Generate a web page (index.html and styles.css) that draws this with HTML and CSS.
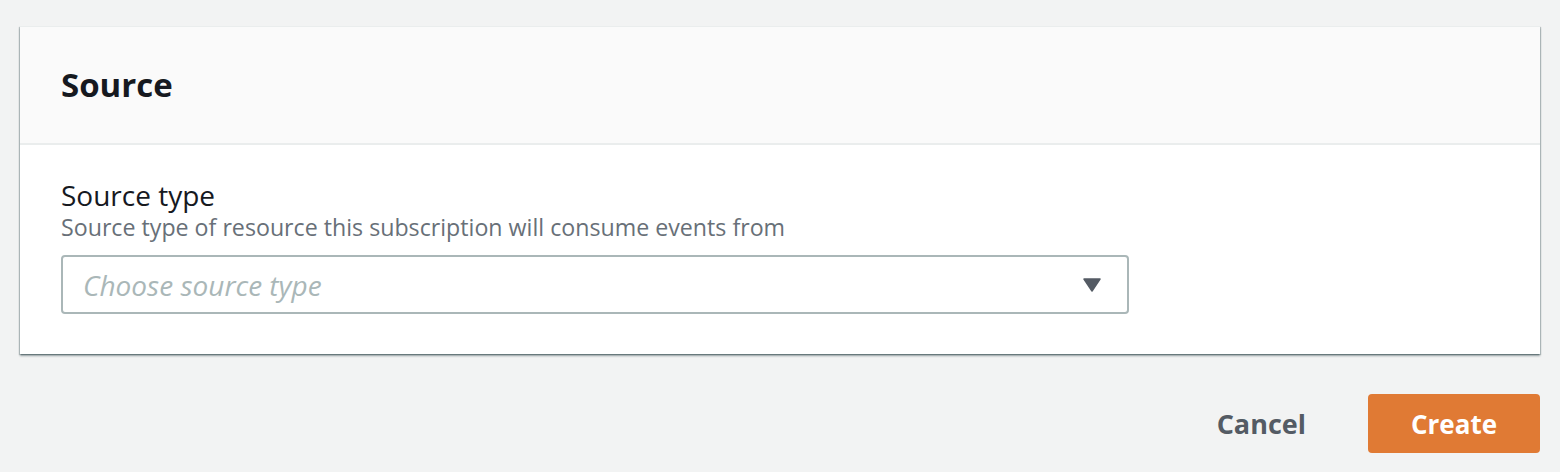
FILE: index.html
```html
<!DOCTYPE html>
<html>
<head>
<meta charset="utf-8">
<link rel="stylesheet" href="styles.css">
</head>
<body>
<div class="page">
  <div class="card">
    <div class="card-header">
      <h2 class="title">Source</h2>
    </div>
    <div class="card-body">
      <div class="field">
        <div class="label">Source type</div>
        <div class="desc">Source type of resource this subscription will consume events from</div>
        <div class="select">
          <span class="placeholder">Choose source type</span>
          <svg class="caret" width="18" height="14" viewBox="0 0 18 14"><path d="M1 1 H17 L9 13 Z" fill="#545b64" stroke="#545b64" stroke-width="1.5" stroke-linejoin="round"/></svg>
        </div>
      </div>
    </div>
  </div>
  <div class="actions">
    <button class="btn-link">Cancel</button>
    <button class="btn-primary">Create</button>
  </div>
</div>
</body>
</html>
```
FILE: styles.css
```css
html, body {
  margin: 0;
  padding: 0;
  background: #f2f3f3;
  font-family: "Open Sans", "Noto Sans", sans-serif;
}
.page {
  padding: 26px 20px 0 20px;
}
.card {
  background: #ffffff;
  border-top: 1px solid #eaeded;
  box-shadow: 0 2px 2px 0 rgba(0, 28, 36, 0.35), 1px 1px 1px 0 rgba(0, 28, 36, 0.2), -1px 1px 1px 0 rgba(0, 28, 36, 0.2);
}
.card-header {
  background: #fafafa;
  border-bottom: 2px solid #eaeded;
  height: 116px;
  padding: 0 41px;
  display: flex;
  align-items: center;
}
.title {
  margin: 0;
  font-size: 33px;
  font-weight: 700;
  color: #16191f;
  line-height: 40px;
  padding-bottom: 1px;
}
.card-body {
  padding: 33px 41px 40px 41px;
}
.label {
  font-size: 28px;
  line-height: 35px;
  color: #16191f;
}
.desc {
  font-size: 23.2px;
  line-height: 28px;
  color: #687078;
}
.select {
  margin-top: 14px;
  width: 1068px;
  height: 59px;
  box-sizing: border-box;
  border: 2px solid #aab7b8;
  border-radius: 4px;
  display: flex;
  align-items: center;
  justify-content: space-between;
  padding: 0 26px 0 20px;
}
.placeholder {
  font-size: 28px;
  font-style: italic;
  color: #aab7b8;
  line-height: 36px;
}
.caret {
  display: block;
}
.actions {
  display: flex;
  justify-content: flex-end;
  align-items: center;
  gap: 62px;
  margin-top: 40px;
}
.btn-link {
  background: none;
  border: none;
  font-family: inherit;
  font-size: 27px;
  font-weight: 700;
  color: #545b64;
  padding: 0;
}
.btn-primary {
  width: 172px;
  height: 59px;
  background: #e07a34;
  border: none;
  border-radius: 4px;
  color: #ffffff;
  font-family: inherit;
  font-size: 26px;
  font-weight: 700;
}
```
